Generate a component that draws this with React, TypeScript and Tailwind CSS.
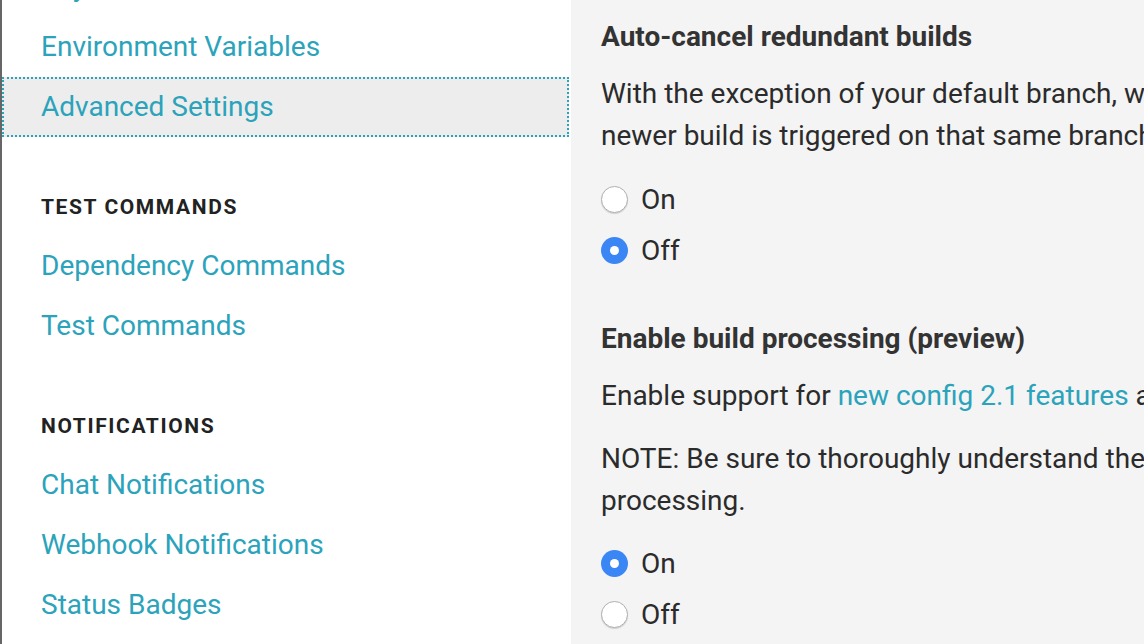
import React from "react";

const link = "text-[#2ba3bb] text-[28px] leading-[60px]";

function NavItem({ label, active }: { label: string; active?: boolean }) {
  return (
    <div
      className={
        active
          ? "h-[60px] flex items-center pl-[39px] bg-[#ededed] outline-2 outline-dotted outline-[#2ba3bb] outline-offset-[-2px] mr-[2px]"
          : "h-[60px] flex items-center pl-[39px]"
      }
    >
      <span className={link}>{label}</span>
    </div>
  );
}

function Header({ label }: { label: string }) {
  return (
    <div className="mt-[56px] mb-[13px] h-[30px] flex items-center pl-[39px]">
      <span className="text-[21px] font-bold tracking-[1.6px] text-[#222] uppercase">{label}</span>
    </div>
  );
}

function Radio({ label, checked }: { label: string; checked?: boolean }) {
  return (
    <div className="h-[51px] flex items-center gap-[13px]">
      {checked ? (
        <span className="w-[27px] h-[27px] rounded-full bg-[#3b86f5] flex items-center justify-center">
          <span className="w-[9px] h-[9px] rounded-full bg-white" />
        </span>
      ) : (
        <span className="w-[27px] h-[27px] rounded-full bg-white border border-[#b0b0b0] shadow-[0_1px_1px_rgba(0,0,0,0.15)]" />
      )}
      <span className="text-[28px] text-[#2b2b2b]">{label}</span>
    </div>
  );
}

export default function App() {
  return (
    <div
      className="w-[1144px] h-[644px] overflow-hidden flex bg-white"
      style={{ fontFamily: "Roboto, 'Noto Sans', sans-serif" }}
    >
      <div className="w-[571px] shrink-0 border-l-2 border-[#666] bg-white">
        <div className="-mt-[43px]">
          <NavItem label="Adjust Parallelism" />
          <NavItem label="Environment Variables" />
          <NavItem label="Advanced Settings" active />
          <Header label="Test Commands" />
          <NavItem label="Dependency Commands" />
          <NavItem label="Test Commands" />
          <Header label="Notifications" />
          <NavItem label="Chat Notifications" />
          <NavItem label="Webhook Notifications" />
          <NavItem label="Status Badges" />
        </div>
      </div>
      <div className="flex-1 min-w-0 bg-[#f4f4f4] overflow-hidden pl-[30px] pt-[19px] whitespace-nowrap text-[#2b2b2b]">
        <h3 className="text-[28px] font-bold leading-[36px] text-[#333]">Auto-cancel redundant builds</h3>
        <p className="mt-[18px] text-[28px] leading-[42px]">
          With the exception of your default branch, we will automatically cancel any queued or running builds when a
          <br />
          newer build is triggered on that same branch. This feature will only apply to builds triggered by pushes.
        </p>
        <div className="mt-[17px]">
          <Radio label="On" />
          <Radio label="Off" checked />
        </div>
        <h3 className="mt-[45px] text-[28px] font-bold leading-[36px] text-[#333]">Enable build processing (preview)</h3>
        <p className="mt-[18px] text-[28px] leading-[42px]">
          Enable support for <span className="text-[#2ba3bb]">new config 2.1 features</span> and orbs on this project.
        </p>
        <p className="mt-[21px] text-[28px] leading-[42px]">
          NOTE: Be sure to thoroughly understand the implications of enabling build
          <br />
          processing.
        </p>
        <div className="mt-[16px]">
          <Radio label="On" checked />
          <Radio label="Off" />
        </div>
      </div>
    </div>
  );
}
